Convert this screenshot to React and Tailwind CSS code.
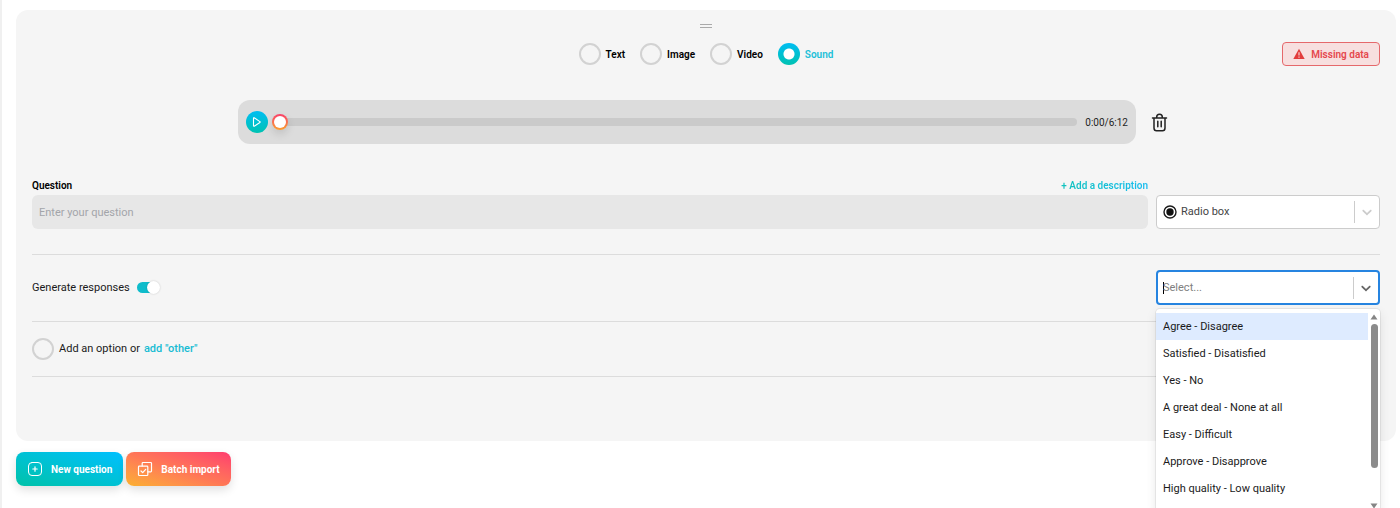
import React, { useState } from 'react';

const MEDIA_TYPES = ['Text', 'Image', 'Video', 'Sound'];

const RESPONSE_SETS = [
  'Agree - Disagree',
  'Satisfied - Disatisfied',
  'Yes - No',
  'A great deal - None at all',
  'Easy - Difficult',
  'Approve - Disapprove',
  'High quality - Low quality',
];

const Chevron = ({ className }) => (
  <svg viewBox="0 0 20 20" className={`size-4 shrink-0 ${className}`} fill="currentColor" aria-hidden="true">
    <path d="M4.516 7.548c0.436-0.446 1.043-0.481 1.576 0l3.908 3.747 3.908-3.747c0.533-0.481 1.141-0.446 1.574 0 0.436 0.445 0.408 1.197 0 1.615-0.406 0.418-4.695 4.502-4.695 4.502-0.217 0.223-0.502 0.335-0.787 0.335s-0.57-0.112-0.789-0.335c0 0-4.287-4.084-4.695-4.502s-0.436-1.17 0-1.615z" />
  </svg>
);

const MediaPicker = () => {
  const [media, setMedia] = useState('Sound');

  return (
    <div className="flex items-center gap-[15px]">
      {MEDIA_TYPES.map((type) => (
        <label
          key={type}
          className={`flex items-center gap-[5px] text-[10px] leading-[15px] font-semibold ${media === type ? 'text-[#1cc0d8]' : 'text-black'}`}
        >
          <input
            type="radio"
            name="media"
            checked={media === type}
            onChange={() => setMedia(type)}
            className="size-[22px] appearance-none rounded-full border-2 border-[#d2d2d2] checked:border-0 checked:bg-[radial-gradient(circle,white_5px,transparent_6px),linear-gradient(to_top,#00c2b2,#00bdf2)]"
          />
          {type}
        </label>
      ))}
    </div>
  );
};

const AudioPlayer = () => (
  <div className="mx-auto flex w-full max-w-[936px] items-center gap-[10px]">
    <div className="flex h-11 flex-1 items-center rounded-xl bg-[#dcdcdc] px-2">
      <button
        type="button"
        aria-label="Play"
        className="flex size-[22px] items-center justify-center rounded-full bg-linear-to-t from-[#00c2b2] to-[#00bdf2] text-white"
      >
        <svg viewBox="0 0 12 12" className="size-3" fill="none" stroke="currentColor" strokeWidth="1.1" strokeLinejoin="round" aria-hidden="true">
          <path d="M2.5 2.200v7.600c0 .4.4.6.7.4l5.700-3.700c.4-.2.4-.7 0-.9L3.200 1.800c-.3-.2-.7 0-.7.4z" />
        </svg>
      </button>
      <input
        type="range"
        aria-label="Position"
        min="0"
        max="372"
        defaultValue="0"
        className="mx-1 h-4 min-w-0 flex-1 appearance-none bg-transparent [&::-webkit-slider-runnable-track]:h-2 [&::-webkit-slider-runnable-track]:rounded-full [&::-webkit-slider-runnable-track]:bg-[#cacaca] [&::-webkit-slider-thumb]:-mt-1 [&::-webkit-slider-thumb]:size-4 [&::-webkit-slider-thumb]:appearance-none [&::-webkit-slider-thumb]:rounded-full [&::-webkit-slider-thumb]:border-2 [&::-webkit-slider-thumb]:border-transparent [&::-webkit-slider-thumb]:[background:linear-gradient(white,white)_padding-box,linear-gradient(to_top,#fba02f,#f9406b)_border-box] [&::-webkit-slider-thumb]:shadow-[0_4px_8px_rgba(0,0,0,0.12)]"
      />
      <span className="ml-1 text-[10px] text-[#1f1f1f]">0:00/6:12</span>
    </div>
    <button type="button" aria-label="Delete sound" className="flex h-6 w-7 items-center justify-center text-[#222]">
      <svg viewBox="0 0 20 20" className="size-5" fill="none" stroke="currentColor" strokeWidth="1.5" strokeLinecap="round" strokeLinejoin="round" aria-hidden="true">
        <path d="M2.500 6h14M4 6v10c0 1.600 1 2.800 2.500 2.800h6c1.500 0 2.500-1.200 2.500-2.800V6M6.700 5.800V5c0-1.600 1.200-2.800 2.800-2.800s2.800 1.200 2.800 2.800v.8M7.800 9.300v5.400M11.200 9.300v5.400" />
      </svg>
    </button>
  </div>
);

const ResponseSelect = () => {
  const [value, setValue] = useState('');

  return (
    <div className="relative w-56">
      <div className="flex h-[35px] items-center rounded-sm border-2 border-[#2684e0] bg-white pl-[5px]">
        <span className="h-3 w-px bg-black" />
        <input
          type="text"
          role="combobox"
          aria-label="Response set"
          aria-expanded="true"
          aria-controls="response-sets"
          placeholder="Select..."
          value={value}
          onChange={(e) => setValue(e.target.value)}
          className="-ml-px min-w-0 flex-1 text-[11px] leading-[17px] outline-none placeholder:text-[#808080]"
        />
        <span className="h-[22px] w-px bg-[#ccc]" />
        <Chevron className="mx-1 text-[#666]" />
      </div>

      {/* Open menu */}
      <div className="absolute top-full left-0 z-10 mt-1 flex h-[204px] w-full rounded-sm bg-white pt-1 shadow-[0_0_0_1px_rgba(0,0,0,0.06),0_4px_11px_rgba(0,0,0,0.1)]">
        <ul id="response-sets" role="listbox" className="flex-1 overflow-hidden">
          {RESPONSE_SETS.map((item, i) => (
            <li
              key={item}
              role="option"
              aria-selected={i === 0}
              onClick={() => setValue(item)}
              className={`flex h-[27px] items-center px-[7px] text-[11px] leading-[17px] text-[#1a1a1a] ${i === 0 ? 'bg-[#deebff]' : ''}`}
            >
              {item}
            </li>
          ))}
        </ul>
        <div className="flex w-3 flex-col items-center gap-1 pt-px pb-1">
          <svg viewBox="0 0 8 6" className="h-[6px] w-2 fill-[#858585]" aria-hidden="true">
            <path d="M4 .5 7.500 5.500h-7z" />
          </svg>
          <span className="h-36 w-[7px] rounded-full bg-[#8b8b8b]" />
          <svg viewBox="0 0 8 6" className="mt-auto h-[6px] w-2 fill-[#858585]" aria-hidden="true">
            <path d="M4 5.500.5.500h7z" />
          </svg>
        </div>
      </div>
    </div>
  );
};

const QuestionCard = () => {
  const [generate, setGenerate] = useState(true);

  return (
    <section className="rounded-xl bg-[#f5f5f5] px-4 pt-3 pb-16">
      <div className="mx-auto flex h-2 w-3 flex-col justify-center gap-[2px]">
        <span className="h-px bg-[#aaa]" />
        <span className="h-px bg-[#aaa]" />
      </div>

      <div className="mt-3 grid grid-cols-[1fr_auto_1fr] items-center">
        <span />
        <MediaPicker />
        <div className="flex h-6 items-center gap-[6px] justify-self-end rounded-sm border border-[#e5686b] bg-[#f7dfdf] px-[10px] text-[10px] leading-[15px] font-semibold text-[#e5484d]">
          <svg viewBox="0 0 12 12" className="size-3" aria-hidden="true">
            <path d="M6 .8 11.700 11H.3z" fill="#e23c3c" />
            <path d="M6 4.300v3.200M6 8.600v1.100" stroke="#f9dfdf" strokeWidth="1.100" />
          </svg>
          Missing data
        </div>
      </div>

      <div className="mt-[34px]">
        <AudioPlayer />
      </div>

      <div className="mt-[34px] flex items-end gap-2">
        <div className="flex-1">
          <div className="mb-[2px] flex items-center justify-between text-[10px] leading-[15px] font-semibold">
            <label htmlFor="question">Question</label>
            <button type="button" className="bg-linear-to-r from-[#12c2bd] to-[#1abcf0] bg-clip-text text-transparent">
              + Add a description
            </button>
          </div>
          <input
            id="question"
            type="text"
            placeholder="Enter your question"
            className="block h-[34px] w-full rounded-md bg-[#e7e7e7] px-[7px] text-[11px] outline-none placeholder:text-[#a3a5aa]"
          />
        </div>
        <div className="flex h-[34px] w-56 items-center rounded-sm border border-[#ccc] bg-white pl-[6px]">
          <svg viewBox="0 0 14 14" className="size-[14px]" aria-hidden="true">
            <circle cx="7" cy="7" r="6" fill="none" stroke="#1a1a1a" strokeWidth="1.400" />
            <circle cx="7" cy="7" r="3.700" fill="#111" />
          </svg>
          <select aria-label="Question type" className="ml-1 min-w-0 flex-1 appearance-none text-[11px] text-[#444] outline-none">
            <option>Radio box</option>
          </select>
          <span className="h-[22px] w-px bg-[#ccc]" />
          <Chevron className="mx-1 text-[#ccc]" />
        </div>
      </div>

      <div className="mt-[25px] flex items-center justify-between border-t border-[#dcdcdc] pt-[15px] pb-4">
        <label className="flex items-center gap-[7px] text-[11px] leading-[17px] text-[#1a1a1a]">
          Generate responses
          <input
            type="checkbox"
            role="switch"
            checked={generate}
            onChange={(e) => setGenerate(e.target.checked)}
            className="relative h-[11px] w-[22px] appearance-none rounded-full bg-[#bbb] before:absolute before:top-[-1px] before:left-0 before:size-[13px] before:rounded-full before:bg-white before:shadow-[0_0_2px_rgba(0,0,0,0.2)] checked:bg-[#0fbccb] checked:before:left-[10px]"
          />
        </label>
        <ResponseSelect />
      </div>

      <div className="flex h-14 items-center border-y border-[#dcdcdc] text-[11px] text-[#1a1a1a]">
        <button type="button" className="flex items-center gap-[5px]">
          <span className="size-[22px] rounded-full border-2 border-[#d2d2d2]" />
          Add an option or
        </button>
        <button type="button" className="ml-1 font-medium text-[#17bcd3]">
          add "other"
        </button>
      </div>
    </section>
  );
};

export default function App() {
  return (
    <main className="min-h-screen overflow-hidden border-l-2 border-[#f0f0f0] bg-white pt-[10px] pr-1 pl-[14px] font-[Roboto,sans-serif]">
      <QuestionCard />

      <div className="mt-[11px] flex gap-[3px] text-[10px] font-bold text-white">
        <button
          type="button"
          className="flex h-[34px] items-center gap-2 rounded-lg bg-linear-to-tr from-[#00c2a8] to-[#00bfff] px-[11px] shadow-[0_4px_10px_rgba(0,0,0,0.12)]"
        >
          <svg viewBox="0 0 16 16" className="size-4" fill="none" stroke="currentColor" strokeWidth="1" strokeLinecap="round" aria-hidden="true">
            <rect x="1.500" y="1.500" width="13" height="13" rx="3.500" />
            <path d="M8 5.800v4.400M5.800 8h4.400" strokeWidth="1.200" />
          </svg>
          New question
        </button>
        <button
          type="button"
          className="flex h-[34px] items-center gap-2 rounded-lg bg-linear-to-tr from-[#fbb02d] via-[#ff7657] to-[#ff3a6e] px-[11px] shadow-[0_4px_10px_rgba(0,0,0,0.12)]"
        >
          <svg viewBox="0 0 16 16" className="size-4" fill="none" stroke="currentColor" strokeWidth="1.200" strokeLinecap="round" strokeLinejoin="round" aria-hidden="true">
            <rect x="1.500" y="5.200" width="9.300" height="9.300" rx=".8" />
            <path d="M5.200 5V2.300c0-.5.300-.8.800-.8h7.700c.5 0 .8.300.8.800V10c0 .5-.3.800-.8.800H11M4 10l1.700 1.700L8.700 8.300" />
          </svg>
          Batch import
        </button>
      </div>
    </main>
  );
}
